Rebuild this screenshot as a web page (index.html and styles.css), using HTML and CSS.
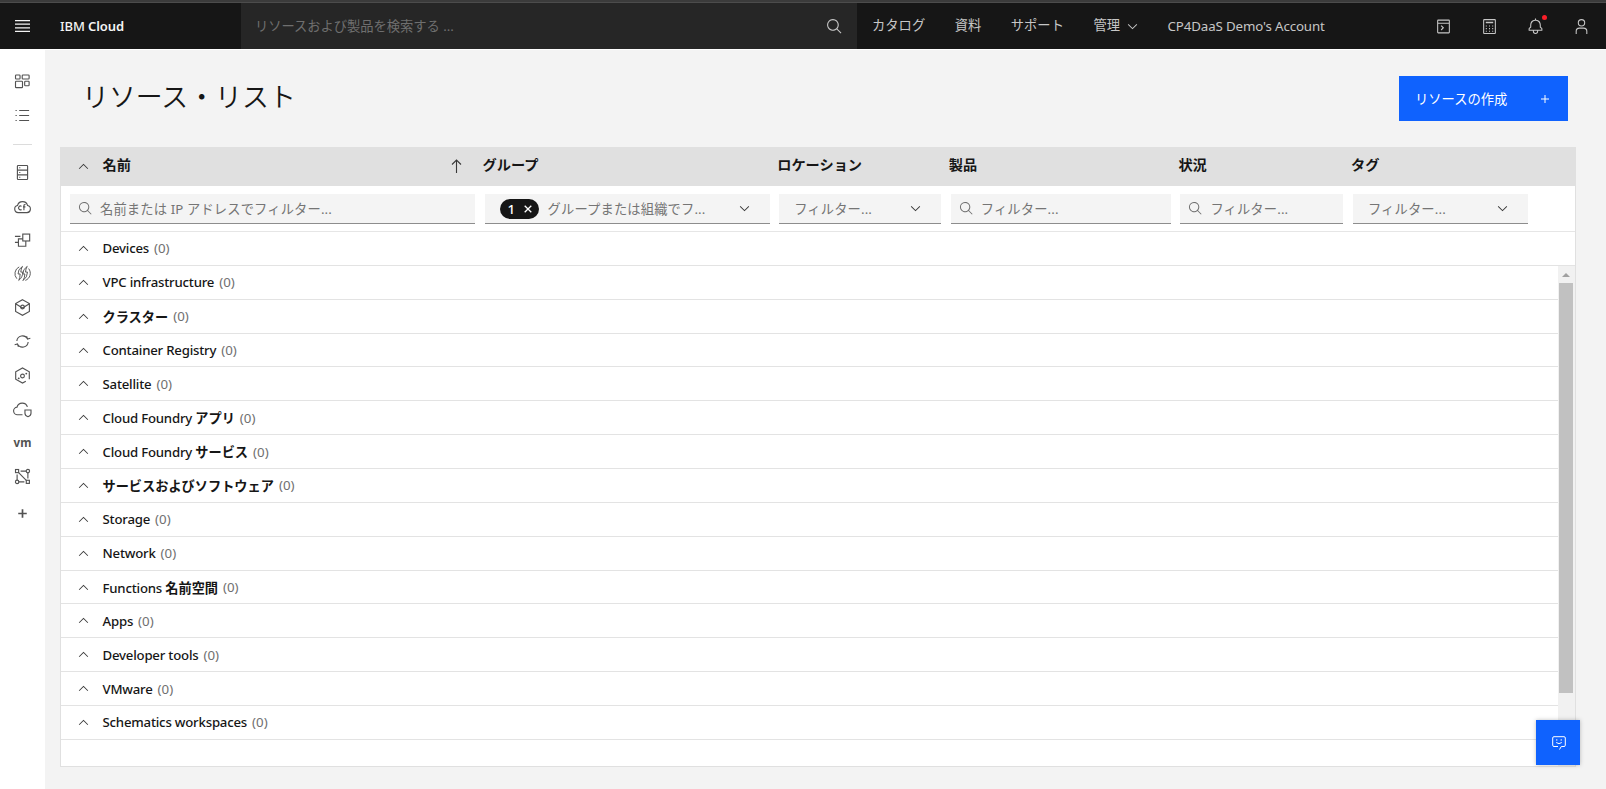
FILE: index.html
```html
<!DOCTYPE html>
<html lang="ja">
<head>
    <meta charset="UTF-8">
    <meta name="viewport" content="width=device-width, initial-scale=1.0">
    <title>リソース・リスト - IBM Cloud</title>
    <link rel="stylesheet" href="styles.css">
</head>
<body>
    <svg class="sprite">
        <symbol id="search" viewBox="0 0 32 32"><path d="M29 27.6 21.5 20.1A11 11 0 1 0 20.1 21.5L27.6 29ZM4 13a9 9 0 1 1 9 9 9 9 0 0 1-9-9Z"/></symbol>
        <symbol id="up" viewBox="0 0 16 16"><path d="M8 5 3 10l.7.7L8 6.4l4.3 4.3.7-.7z"/></symbol>
        <symbol id="down" viewBox="0 0 16 16"><path d="M8 11 3 6l.7-.7L8 9.6l4.3-4.3.7.7z"/></symbol>
    </svg>

    <div class="strip"></div>
    <header class="topbar">
        <button class="menu-btn">
            <svg width="15" height="12" viewBox="0 0 15 12"><path d="M0 .6h15M0 4.2h15M0 7.8h15M0 11.4h15" stroke="#f4f4f4" stroke-width="1.2"/></svg>
        </button>
        <a class="brand" href="#">IBM <b>Cloud</b></a>
        <div class="global-search">
            <span>リソースおよび製品を検索する ...</span>
            <svg class="icon"><use href="#search"/></svg>
        </div>
        <nav class="top-links">
            <a href="#">カタログ</a>
            <a href="#">資料</a>
            <a href="#">サポート</a>
            <a href="#">管理 <svg class="chev"><use href="#down"/></svg></a>
            <a href="#" class="account">CP4DaaS Demo's Account</a>
        </nav>
        <div class="top-icons">
            <svg class="icon" viewBox="0 0 32 32"><path d="M26 3H6a2 2 0 0 0-2 2v22a2 2 0 0 0 2 2h20a2 2 0 0 0 2-2V5a2 2 0 0 0-2-2Zm0 2v4H6V5ZM6 27V11h20v16Z"/><path d="m10.800 15.200 3.300 3.300-3.300 3.300 1.500 1.500 4.800-4.800-4.800-4.800z"/></svg>
            <svg class="icon" viewBox="0 0 32 32"><path d="M26 4v24H6V4h20m0-2H6a2 2 0 0 0-2 2v24a2 2 0 0 0 2 2h20a2 2 0 0 0 2-2V4a2 2 0 0 0-2-2Z"/><path d="M9 7h14v3H9zM9 14h2v2H9zM15 14h2v2h-2zM21 14h2v2h-2zM9 19h2v2H9zM15 19h2v2h-2zM21 19h2v2h-2zM9 24h2v2H9zM15 24h2v2h-2zM21 24h2v2h-2z"/></svg>
            <span class="bell">
                <svg class="icon" viewBox="0 0 32 32"><path d="M28.7 19.3 26 16.6V13a10 10 0 0 0-9-9.9V1h-2v2.1A10 10 0 0 0 6 13v3.6l-2.7 2.7a1 1 0 0 0-.3.7v3a1 1 0 0 0 1 1h7v.8a5 5 0 0 0 10 .2v-1h7a1 1 0 0 0 1-1v-3a1 1 0 0 0-.3-.7ZM19 25a3 3 0 0 1-6 0v-1h6Zm8-3H5v-1.600l2.700-2.700A1 1 0 0 0 8 17v-4a8 8 0 0 1 16 0v4a1 1 0 0 0 .3.700L27 20.400Z"/></svg>
                <i class="dot"></i>
            </span>
            <svg class="icon" viewBox="0 0 32 32"><path d="M16 4a5 5 0 1 1-5 5 5 5 0 0 1 5-5m0-2a7 7 0 1 0 7 7 7 7 0 0 0-7-7ZM27 30h-2v-5a5 5 0 0 0-5-5h-8a5 5 0 0 0-5 5v5H5v-5a7 7 0 0 1 7-7h8a7 7 0 0 1 7 7Z"/></svg>
        </div>
    </header>

    <div class="layout">
        <nav class="sidebar">
            <a href="#"><svg viewBox="0 0 18 18"><rect x="1.600" y="2.100" width="4.800" height="4.300" rx=".8"/><rect x="8.700" y="2.100" width="7.300" height="4.300" rx=".8"/><rect x="1.600" y="8.700" width="7.400" height="6.800" rx=".8"/><rect x="11.300" y="8.700" width="4.700" height="4.800" rx=".8"/></svg></a>
            <a href="#"><svg viewBox="0 0 18 18"><path d="M5.500 3.700H16M5.500 9H16M5.500 14.300H16M1.600 3.700h1.300M1.600 9h1.300M1.600 14.300h1.300"/></svg></a>
            <hr>
            <a href="#"><svg viewBox="0 0 18 18"><rect x="3.600" y="1.600" width="10.800" height="14.800" rx=".8"/><path d="M3.600 6.500h10.800M3.600 11.500h10.800M5.500 4h1.200M5.500 9h1.200M5.500 14h1.200"/></svg></a>
            <a href="#"><svg class="wide" viewBox="0 0 20 18"><path d="M5.500 15.500h9.300a3.800 3.800 0 0 0 .6-7.500A5.500 5.500 0 0 0 4.700 8a3.800 3.800 0 0 0 .8 7.500Z"/><path d="M9 8.900a2 2 0 1 0 0 3.200M11.500 13V8.200q0-1.500 1.700-1.300M10.500 9.400h2.600"/></svg></a>
            <a href="#"><svg viewBox="0 0 18 18"><rect x="9.300" y="2.200" width="7.300" height="7.300"/><path d="M1 4.600h5.800M1 11h3.500M9.300 7.300H4.700v7.800h7.800V9.500"/></svg></a>
            <a href="#"><svg class="bolt" viewBox="0 0 18 18"><path d="M3 14.500A8 8 0 0 1 5.500 2M15.500 3.800a8 8 0 0 1-3.500 12.500M9 1.500Q3.900 4.500 4.300 9.500H6.500Q6.500 13.500 5 16.300 9.300 13 9.300 7.500H7.200Q7.300 4 9 1.500ZM14 1.500Q9.200 4.500 9.300 9.500h2.200Q11.500 13.500 9.500 16.500 14.300 13 14.300 7.500h-2.100Q12.300 4 14 1.500Z"/></svg></a>
            <a href="#"><svg viewBox="0 0 18 18"><path d="m9 .8 7.300 4v8.400L9 17.200l-7.300-4V4.800ZM1.700 5 9 9.500 16.300 5"/><circle cx="9" cy="8.500" r="2"/></svg></a>
            <a href="#"><svg viewBox="0 0 18 18"><path d="M3 8.500A6.100 6.100 0 0 1 14.300 6M15 9.500A6.100 6.100 0 0 1 3.700 12M17.300 5.500 14.300 6.300 13.300 3.500M.7 12.500l3-.8 1 2.800"/></svg></a>
            <a href="#"><svg viewBox="0 0 18 18"><path d="M16.200 13V5L9 1 1.800 5v8L9 17l3.500-2"/><circle cx="9" cy="9.500" r="2"/><circle class="fill" cx="5" cy="12" r="1"/><circle class="fill" cx="13" cy="7" r="1"/></svg></a>
            <a href="#"><svg class="wide" viewBox="0 0 20 18"><path d="M10 14.500H5A4 4 0 0 1 4.200 6.500a5.700 5.700 0 0 1 11-.2M12.600 9.500h6.400v3.500q0 2.700-3.200 3.600-3.200-.9-3.200-3.600Z"/></svg></a>
            <a href="#" class="vm">vm</a>
            <a href="#"><svg viewBox="0 0 18 18"><rect x="1.600" y="1.600" width="3.300" height="3.300"/><rect x="13" y="13" width="3.300" height="3.300"/><circle cx="14.700" cy="3.300" r="1.800"/><circle cx="3.300" cy="14.700" r="1.800"/><path d="M7 3.300h6M3.300 7v6M5 14.700h6M14.700 5v6M4.900 4.900 13 13"/></svg></a>
            <a href="#" class="add"><svg viewBox="0 0 18 18"><path d="M9 4.500v9M4.500 9h9"/></svg></a>
        </nav>

        <main class="content">
            <div class="page-head">
                <h1>リソース・リスト</h1>
                <button class="create-btn">リソースの作成
                    <svg width="8" height="8" viewBox="0 0 8 8"><path d="M4 0v8M0 4h8" stroke="#fff"/></svg>
                </button>
            </div>

            <section class="table">
                <div class="cols table-head">
                    <div class="th first"><svg class="chev"><use href="#up"/></svg>名前
                        <svg class="sort" viewBox="0 0 11 14"><path d="M5.500 14V1M1 5.500 5.500 1 10 5.500"/></svg>
                    </div>
                    <div class="th">グループ</div>
                    <div class="th">ロケーション</div>
                    <div class="th">製品</div>
                    <div class="th">状況</div>
                    <div class="th">タグ</div>
                </div>
                <div class="cols filters">
                    <div class="field"><svg class="glass"><use href="#search"/></svg>名前または IP アドレスでフィルター...</div>
                    <div class="field select">
                        <span class="tag">1 <svg width="8" height="8" viewBox="0 0 8 8"><path d="m.7.7 6.600 6.600M7.300.7.7 7.300" stroke="#fff" stroke-width="1.300"/></svg></span>
                        グループまたは組織でフ...
                        <svg class="chev"><use href="#down"/></svg>
                    </div>
                    <div class="field select">フィルター...<svg class="chev"><use href="#down"/></svg></div>
                    <div class="field"><svg class="glass"><use href="#search"/></svg>フィルター...</div>
                    <div class="field"><svg class="glass"><use href="#search"/></svg>フィルター...</div>
                    <div class="field select">フィルター...<svg class="chev"><use href="#down"/></svg></div>
                </div>
                <div class="row"><svg class="chev"><use href="#up"/></svg><b>Devices</b><span>(0)</span></div>
                <div class="scroll-area">
                    <div class="rows">
                        <div class="row"><svg class="chev"><use href="#up"/></svg><b>VPC infrastructure</b><span>(0)</span></div>
                        <div class="row"><svg class="chev"><use href="#up"/></svg><b><em>クラスター</em></b><span>(0)</span></div>
                        <div class="row"><svg class="chev"><use href="#up"/></svg><b>Container Registry</b><span>(0)</span></div>
                        <div class="row"><svg class="chev"><use href="#up"/></svg><b>Satellite</b><span>(0)</span></div>
                        <div class="row"><svg class="chev"><use href="#up"/></svg><b>Cloud Foundry <em>アプリ</em></b><span>(0)</span></div>
                        <div class="row"><svg class="chev"><use href="#up"/></svg><b>Cloud Foundry <em>サービス</em></b><span>(0)</span></div>
                        <div class="row"><svg class="chev"><use href="#up"/></svg><b><em>サービスおよびソフトウェア</em></b><span>(0)</span></div>
                        <div class="row"><svg class="chev"><use href="#up"/></svg><b>Storage</b><span>(0)</span></div>
                        <div class="row"><svg class="chev"><use href="#up"/></svg><b>Network</b><span>(0)</span></div>
                        <div class="row"><svg class="chev"><use href="#up"/></svg><b>Functions <em>名前空間</em></b><span>(0)</span></div>
                        <div class="row"><svg class="chev"><use href="#up"/></svg><b>Apps</b><span>(0)</span></div>
                        <div class="row"><svg class="chev"><use href="#up"/></svg><b>Developer tools</b><span>(0)</span></div>
                        <div class="row"><svg class="chev"><use href="#up"/></svg><b>VMware</b><span>(0)</span></div>
                        <div class="row"><svg class="chev"><use href="#up"/></svg><b>Schematics workspaces</b><span>(0)</span></div>
                    </div>
                    <div class="scrollbar">
                        <svg width="8" height="4" viewBox="0 0 8 4"><path d="M4 0 8 4H0z" fill="#a0a0a0"/></svg>
                        <div class="thumb"></div>
                    </div>
                </div>
            </section>
        </main>
    </div>

    <button class="chat">
        <svg width="14" height="14" viewBox="0 0 14 14"><path d="M6 10.500H2A1.300 1.300 0 0 1 .7 9.200V2A1.300 1.300 0 0 1 2 .7h10A1.300 1.300 0 0 1 13.300 2v7.200a1.300 1.300 0 0 1-1.300 1.300H9.300L7.500 13.500M4.800 3.200v1.500M9.200 3.200v1.500M4.200 6.500q2.800 2.300 5.600 0" fill="none" stroke="#fff"/></svg>
    </button>
</body>
</html>
```
FILE: styles.css
```css
* {
    box-sizing: border-box;
}

body {
    margin: 0;
    height: 100vh;
    display: flex;
    flex-direction: column;
    overflow: hidden;
    background-color: #f3f3f3;
    color: #161616;
    font-family: "Noto Sans", "Noto Sans CJK JP", sans-serif;
    font-size: 13.3px;
    white-space: nowrap;
}

a {
    color: inherit;
    text-decoration: none;
}

button {
    border: none;
    padding: 0;
    font: inherit;
    color: inherit;
    background: none;
}

em {
    font-style: normal;
}

.sprite {
    display: none;
}

.strip {
    height: 3px;
    background-color: #3b3b3b;
    border-bottom: 1px solid #4c4c4c;
    flex: none;
}

/* Header */
.topbar {
    display: flex;
    align-items: center;
    height: 46px;
    flex: none;
    background-color: #161616;
    color: #c6c6c6;
}

.menu-btn {
    width: 45px;
    display: flex;
    justify-content: center;
}

.brand {
    width: 196px;
    padding: 0 0 1px 15px;
    color: #f4f4f4;
    font-weight: 500;
    font-size: 13px;
    letter-spacing: -0.1px;
}

.brand b {
    font-weight: 600;
}

.global-search {
    width: 616px;
    height: 46px;
    padding: 0 14px;
    display: flex;
    align-items: center;
    justify-content: space-between;
    background-color: #262626;
    color: #6f6f6f;
}

.global-search span {
    padding-bottom: 2px;
    letter-spacing: -0.05px;
}

.icon {
    width: 17px;
    height: 17px;
    fill: #c6c6c6;
    display: block;
}

.chev {
    width: 15px;
    height: 15px;
    flex: none;
    fill: #393939;
}

.top-links {
    display: flex;
    align-items: center;
    gap: 29.5px;
    padding-left: 15px;
}

.top-links a {
    display: flex;
    align-items: center;
    gap: 5px;
    padding-bottom: 3px;
}

.top-links .chev {
    margin-top: 3px;
    fill: #c6c6c6;
}

.top-links .account {
    margin-left: -2px;
    padding-bottom: 0;
    letter-spacing: -0.13px;
}

.top-icons {
    display: flex;
    gap: 29px;
    margin-left: auto;
    padding-right: 16px;
}

.bell {
    position: relative;
}

.dot {
    position: absolute;
    top: -3px;
    right: -3px;
    width: 5px;
    height: 5px;
    border-radius: 50%;
    background-color: #fa1e28;
}

/* Sidebar */
.layout {
    display: flex;
    flex: 1;
    min-height: 0;
    border-top: 1px solid #fff;
}

.sidebar {
    width: 45px;
    padding-top: 15px;
    background-color: #fff;
    display: flex;
    flex-direction: column;
    align-items: center;
}

.sidebar a {
    height: 33.8px;
    display: flex;
    align-items: center;
}

.sidebar svg {
    width: 17px;
    height: 17px;
    fill: none;
    stroke: #525252;
    stroke-width: 1.2;
}

.sidebar .wide {
    width: 19px;
}

.sidebar .bolt {
    stroke-width: 1;
}

.sidebar .fill {
    fill: #525252;
    stroke: none;
}

.sidebar hr {
    width: 19px;
    height: 1px;
    margin: 11px 0;
    border: none;
    background-color: #dcdcdc;
}

.sidebar .vm {
    color: #525252;
    font-size: 11.5px;
    font-weight: 700;
    padding-bottom: 1px;
}

.sidebar .add {
    margin-top: 3px;
}

.sidebar .add svg {
    stroke-width: 1.8;
}

/* Page */
.content {
    flex: 1;
    padding: 26px 30px 22px 15px;
    display: flex;
    flex-direction: column;
}

.page-head {
    display: flex;
    justify-content: space-between;
    height: 71px;
    padding: 0 8px 0 22px;
}

h1 {
    margin: 0;
    font-size: 26.9px;
    font-weight: 350;
    line-height: 42px;
}

.create-btn {
    width: 169px;
    height: 45px;
    padding: 0 19px 0 16px;
    display: flex;
    align-items: center;
    justify-content: space-between;
    background-color: #0f62fe;
    color: #fff;
}

/* Resource table */
.table {
    width: 1516px;
    height: 620px;
    background-color: #fff;
    border: 1px solid #e0e0e0;
    border-top: none;
    display: flex;
    flex-direction: column;
}

.cols {
    display: grid;
    grid-template-columns: 405px 285px 162px 220px 163px 175px;
    column-gap: 9.6px;
    padding-left: 9px;
    flex: none;
}

.table-head {
    height: 39px;
    background-color: #e0e0e0;
    align-items: center;
    padding-bottom: 5px;
}

.th {
    display: flex;
    align-items: center;
    font-size: 14.2px;
    font-weight: 700;
    margin-left: -2px;
}

.first {
    margin-left: 0;
    padding: 0 13px 0 6px;
}

.th .chev {
    margin: 5px 11.5px 0 0;
}

.sort {
    width: 11px;
    height: 14px;
    margin: 3px 0 0 auto;
    fill: none;
    stroke: #393939;
    stroke-width: 1.1;
}

.filters {
    height: 46px;
    padding-top: 8px;
    border-bottom: 1px solid #e6e6e6;
}

.field {
    height: 30px;
    display: flex;
    align-items: center;
    padding: 0 8px;
    background-color: #f4f4f4;
    border-bottom: 1px solid #8d8d8d;
    color: #757575;
    letter-spacing: 0.12px;
}

.select {
    padding: 0 18px 0 15px;
}

.select .chev {
    margin-left: auto;
}

.glass {
    width: 15px;
    height: 15px;
    margin-right: 7px;
    fill: #6f6f6f;
}

.tag {
    width: 39px;
    height: 20px;
    margin-right: 9px;
    padding: 0 7px 0 8px;
    border-radius: 10px;
    display: flex;
    align-items: center;
    justify-content: space-between;
    background-color: #161616;
    color: #fff;
    font-weight: 500;
}

.row {
    height: 33.86px;
    flex: none;
    display: flex;
    align-items: center;
    padding-left: 15px;
    border-bottom: 1px solid #e3e3e3;
}

.row .chev {
    margin-right: 11.5px;
}

.row b {
    font-weight: 500;
    font-size: 13.2px;
    letter-spacing: -0.2px;
}

.row em {
    font-weight: 700;
    letter-spacing: 0;
}

.row span {
    margin-left: 5px;
    color: #6f6f6f;
}

.scroll-area {
    flex: 1;
    min-height: 0;
    display: flex;
}

.rows {
    flex: 1;
}

.scrollbar {
    width: 17px;
    background-color: #f1f1f1;
    display: flex;
    flex-direction: column;
    align-items: center;
    padding: 7px 1px 0 0;
}

.thumb {
    width: 14px;
    height: 410px;
    margin-top: 6px;
    background-color: #c1c1c1;
}

.chat {
    position: fixed;
    right: 26px;
    bottom: 24px;
    width: 44px;
    height: 45px;
    padding-left: 2px;
    display: flex;
    align-items: center;
    justify-content: center;
    background-color: #0f62fe;
    box-shadow: 0 0 4px rgba(0, 0, 0, 0.25);
}
```
